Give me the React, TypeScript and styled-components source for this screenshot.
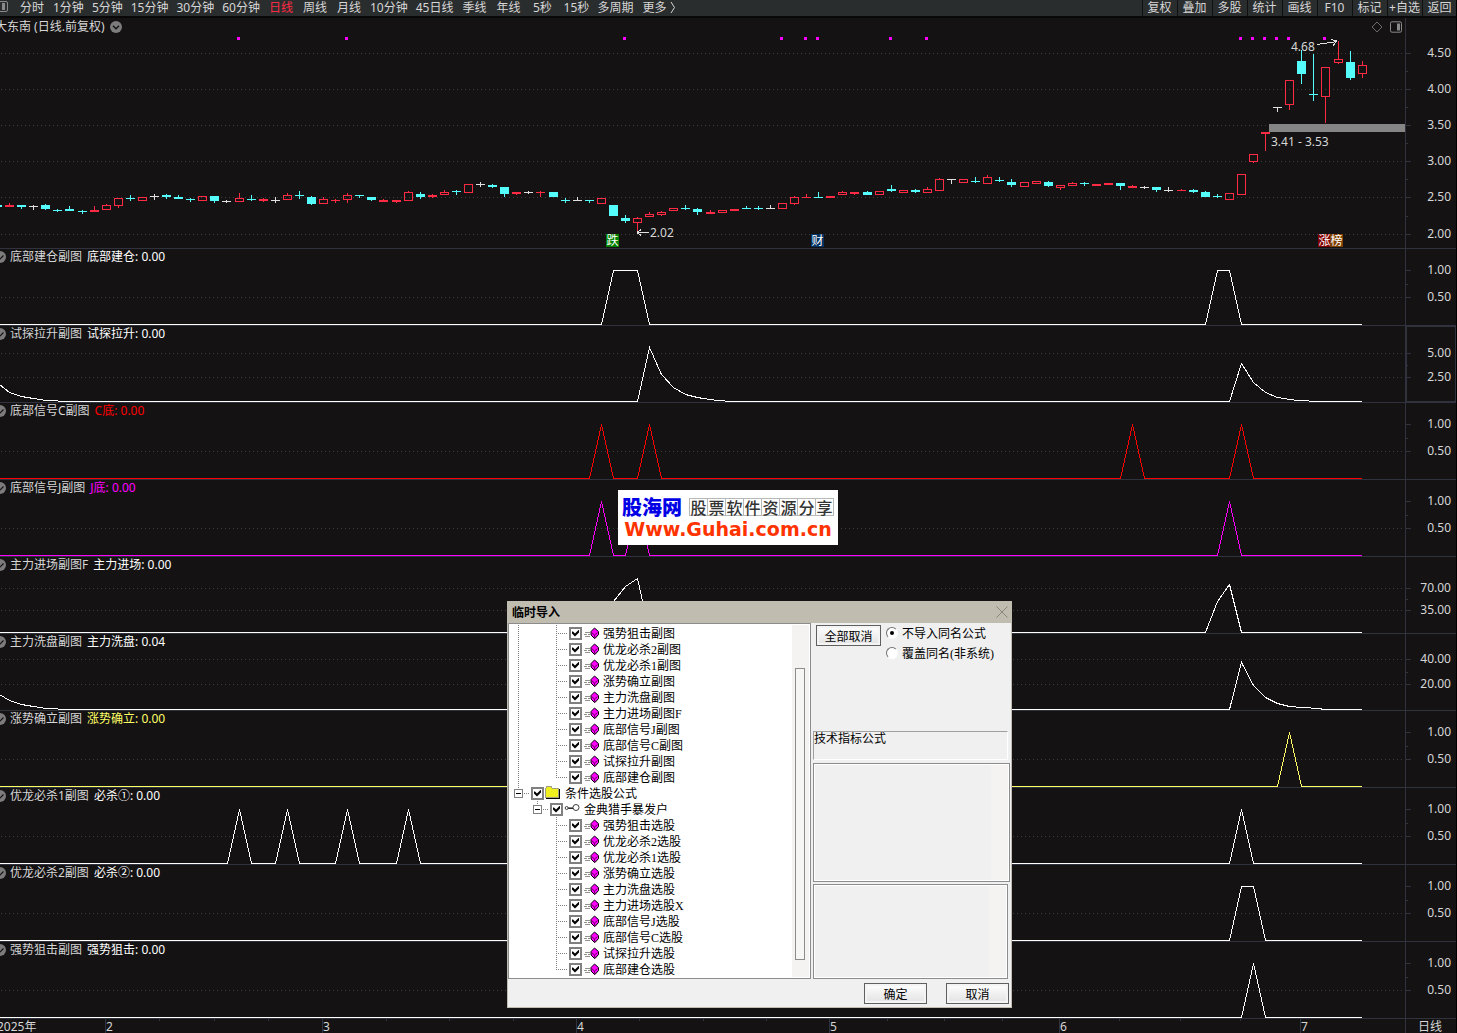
import React from "react";
import styled, { createGlobalStyle, css } from "styled-components";

const uiFont = `"Noto Sans", "Noto Sans CJK SC", sans-serif`;
const dialogFont = `"Liberation Serif", "Noto Sans CJK SC", sans-serif`;

const GlobalStyle = createGlobalStyle`
  *, *::before, *::after { box-sizing: border-box; }
  body { margin: 0; background: #141213; overflow-x: hidden; }
  button, input { font: inherit; color: inherit; margin: 0; padding: 0; }
`;

const color = {
  bg: "#141213",
  line: "#30333d",
  dot: "#3b3d3f",
  text: "#d6d6d6",
  up: "#ff2a44",
  down: "#54fcfc",
  flat: "#e0e0e0",
  magenta: "#ff00ff",
};

/* ---------- page shell ---------- */

const Page = styled.div`
  position: relative;
  overflow: hidden;
  background: ${color.bg};
  color: ${color.text};
  border-right: 1px solid #000;
  font-family: ${uiFont};
  font-size: 12px;
  line-height: 16px;
`;

const Toolbar = styled.header`
  display: flex;
  justify-content: space-between;
  height: 18px;
  background: #2a2d2e;
  border-bottom: 2px solid #080808;
  margin-right: -1px;
`;

const Periods = styled.nav`
  display: flex;
  gap: 8px;
`;

const LayoutButton = styled.button`
  display: flex;
  width: 11px;
  border: 0;
  background: none;
`;

const PeriodButton = styled.button<{ $active?: boolean }>`
  min-width: 26px;
  height: 16px;
  line-height: 16px;
  border: 0;
  background: none;
  white-space: nowrap;
  color: ${(p) => (p.$active ? color.up : color.text)};
`;

const MoreArrow = styled.svg`
  margin-left: -5px;
`;

const Actions = styled.div`
  display: flex;
`;

const ActionButton = styled.button`
  display: flex;
  justify-content: center;
  width: 35px;
  height: 16px;
  padding-right: 1px;
  line-height: 16px;
  border: 0;
  border-left: 1px solid #101010;
  background: none;
  white-space: nowrap;
`;

/* ---------- chart panels ---------- */

const Panel = styled.section`
  display: flex;
  border-bottom: 1px solid ${color.line};
`;

const Plot = styled.div`
  position: relative;
  display: grid;
  flex: 1;
  min-width: 0;
  overflow: hidden;
  > * { grid-area: 1 / 1; }
`;

const Canvas = styled.svg<{ $height: number }>`
  display: block;
  width: 100%;
  height: ${(p) => p.$height}px;
  shape-rendering: crispEdges;
`;

const AxisCanvas = styled.svg`
  display: block;
  flex: none;
  shape-rendering: crispEdges;
  font-family: ${uiFont};
  font-size: 12px;
  fill: ${color.text};
`;

const PanelHead = styled.div`
  display: flex;
  align-items: center;
  align-self: start;
  height: 16px;
  margin-left: -6px;
  white-space: nowrap;
  z-index: 1;
`;

const IndicatorName = styled.span`
  margin: 0 5px 0 4px;
`;

const IndicatorValue = styled.span<{ $color: string }>`
  color: ${(p) => p.$color};
`;

const MainHead = styled(PanelHead)`
  height: 18px;
  margin-left: -5px;
  padding-right: 2px;
  gap: 5px;
`;

const HeadTools = styled.div`
  display: flex;
  gap: 6px;
  margin-left: auto;
`;

const Annotation = styled.span`
  position: absolute;
  line-height: 16px;
  white-space: nowrap;
`;

const Badge = styled.span<{ $bg: string }>`
  position: absolute;
  width: 13px;
  height: 13px;
  line-height: 13px;
  text-align: center;
  color: #fff;
  background: ${(p) => p.$bg};
`;

const TimeRow = styled.footer`
  display: flex;
  height: 14px;
`;

const TimePlot = styled.div`
  position: relative;
  flex: 1;
`;

const Month = styled.span`
  position: absolute;
  top: 0;
  height: 14px;
  line-height: 16px;
  border-left: 1px solid ${color.line};
`;

const MinorTick = styled.i`
  position: absolute;
  top: 0;
  width: 1px;
  height: 2px;
  background: ${color.line};
`;

const TimeUnit = styled.span`
  width: 51px;
  padding-left: 12px;
  line-height: 16px;
  border-left: 1px solid ${color.line};
`;

/* ---------- data ---------- */

const WIDTH = 1405;
const pct = (x: number) => `${(x / WIDTH) * 100}%`;
const barX = (i: number) => 9 + 12 * i + Math.floor((i + 7) / 13);

// kind, high, body top, body bottom, low; rows are measured from BASE_ROW
type Candle = [string, number, number, number, number];
const BASE_ROW = 152;
const candles: Candle[] = [
  ["r", 33, 35, 37, 37], ["c", 35, 35, 37, 39], ["w", 35, 36, 37, 40], ["c", 34, 35, 39, 40],
  ["c", 39, 40, 41, 42], ["c", 36, 39, 41, 41], ["c", 40, 41, 42, 44], ["r", 36, 40, 42, 42],
  ["r", 34, 35, 40, 40], ["r", 28, 28, 36, 38], ["c", 25, 28, 29, 31], ["r", 27, 27, 31, 31],
  ["w", 24, 26, 27, 30], ["c", 24, 25, 27, 29], ["c", 25, 27, 29, 29], ["c", 28, 29, 30, 32],
  ["r", 26, 26, 31, 31], ["c", 26, 26, 31, 33], ["w", 30, 31, 32, 33], ["r", 23, 28, 32, 32],
  ["c", 25, 29, 30, 31], ["r", 28, 29, 31, 32], ["w", 27, 30, 31, 33], ["r", 23, 25, 30, 30],
  ["c", 21, 25, 26, 29], ["c", 26, 27, 34, 35], ["r", 27, 29, 34, 34], ["r", 29, 30, 31, 33],
  ["r", 23, 25, 30, 33], ["c", 25, 25, 26, 28], ["c", 27, 27, 30, 31], ["r", 29, 30, 32, 32],
  ["r", 30, 30, 32, 33], ["r", 21, 22, 31, 31], ["c", 22, 24, 27, 29], ["r", 24, 25, 27, 28],
  ["r", 20, 22, 25, 25], ["c", 20, 21, 22, 25], ["r", 14, 14, 23, 23], ["w", 12, 14, 15, 17],
  ["c", 14, 15, 17, 18], ["c", 17, 17, 24, 27], ["r", 22, 22, 24, 25], ["w", 21, 22, 23, 24],
  ["r", 21, 22, 23, 27], ["c", 22, 22, 27, 27], ["c", 28, 30, 31, 33], ["w", 27, 30, 31, 31],
  ["c", 30, 30, 31, 33], ["r", 28, 28, 34, 34], ["c", 35, 35, 46, 46], ["c", 45, 48, 51, 53],
  ["r", 47, 48, 53, 62], ["r", 42, 44, 47, 47], ["r", 41, 42, 45, 46], ["r", 38, 38, 41, 41],
  ["c", 35, 38, 39, 40], ["c", 38, 39, 42, 45], ["r", 40, 42, 44, 44], ["r", 40, 40, 43, 43],
  ["r", 39, 39, 41, 41], ["c", 36, 38, 39, 39], ["c", 36, 38, 39, 40], ["w", 35, 38, 39, 39],
  ["r", 33, 33, 39, 39], ["r", 26, 27, 34, 35], ["r", 24, 27, 28, 28], ["c", 22, 27, 28, 28],
  ["r", 26, 26, 28, 28], ["r", 21, 22, 25, 25], ["r", 22, 22, 24, 25], ["c", 21, 22, 25, 25],
  ["r", 21, 21, 25, 25], ["c", 15, 19, 21, 22], ["r", 20, 20, 23, 23], ["c", 19, 20, 22, 23],
  ["r", 17, 19, 23, 23], ["r", 8, 9, 21, 21], ["w", 9, 9, 10, 14], ["r", 9, 9, 13, 13],
  ["c", 7, 11, 12, 13], ["r", 5, 7, 14, 14], ["c", 7, 10, 11, 12], ["c", 9, 12, 15, 17],
  ["r", 12, 12, 17, 17], ["r", 11, 11, 14, 14], ["c", 11, 12, 16, 17], ["r", 15, 15, 18, 20],
  ["r", 12, 13, 16, 16], ["c", 12, 13, 14, 16], ["r", 14, 14, 16, 16], ["r", 13, 13, 15, 15],
  ["c", 13, 13, 16, 20], ["r", 15, 16, 18, 18], ["w", 16, 17, 18, 19], ["c", 17, 17, 20, 22],
  ["w", 17, 20, 21, 22], ["r", 19, 20, 21, 21], ["c", 19, 20, 22, 23], ["c", 21, 22, 27, 27],
  ["c", 24, 26, 27, 28], ["r", 23, 23, 30, 30], ["r", 4, 4, 25, 25], ["r", -16, -16, -8, -7],
  ["r", -38, -38, -36, -19], ["w", -63, -63, -62, -58], ["r", -90, -90, -65, -60],
  ["c", -120, -109, -96, -86], ["c", -116, -76, -75, -69], ["r", -103, -103, -73, -47],
  ["r", -129, -111, -107, -106], ["c", -119, -108, -92, -90], ["r", -109, -105, -96, -92],
];
const signals = [19, 28, 51, 64, 66, 67, 73, 76, 102, 103, 104, 105, 106, 109];

type Tick = [number, string];
interface Indicator {
  name: string;
  label: string;
  value: string;
  stroke: string;
  points: string;
  grid: number[];
  ticks: Tick[];
  selected?: boolean;
}

const BASE = 75;
const TOP = 21;
const END = 1361;
const peaks = (...xs: number[]) =>
  [`-1,${BASE}`, ...xs.map((x) => `${x - 12},${BASE} ${x},${TOP} ${x + 12},${BASE}`), `${END},${BASE}`].join(" ");

const unit = { grid: [48], ticks: [[21, "1.00"], [48, "0.50"]] as Tick[] };

const indicators: Indicator[] = [
  { name: "底部建仓副图", label: "底部建仓", value: "0.00", stroke: "#ffffff", ...unit,
    points: "-1,75 601,75 613,21 637,21 649,75 1205,75 1217,21 1229,21 1241,75 1361,75" },
  { name: "试探拉升副图", label: "试探拉升", value: "0.00", stroke: "#ffffff", selected: true,
    grid: [27, 51], ticks: [[27, "5.00"], [51, "2.50"]],
    points: "-1,58 9,66 21,70 33,72 45,74 70,75 637,75 649,21 661,48 673,61 685,68 697,71 709,73 718,74 730,75 1229,75 1241,37 1253,56 1265,66 1277,71 1289,73 1297,74 1320,75 1361,75" },
  { name: "底部信号C副图", label: "C底", value: "0.00", stroke: "#ff0000", ...unit, points: peaks(601, 649, 1132, 1241) },
  { name: "底部信号J副图", label: "J底", value: "0.00", stroke: "#ff00ff", ...unit, points: peaks(601, 637, 1229) },
  { name: "主力进场副图F", label: "主力进场", value: "0.00", stroke: "#ffffff",
    grid: [31, 53], ticks: [[31, "70.00"], [53, "35.00"]],
    points: "-1,75 601,75 613,44 625,29 637,21 649,75 1205,75 1217,44 1229,27 1241,75 1361,75" },
  { name: "主力洗盘副图", label: "主力洗盘", value: "0.04", stroke: "#ffffff",
    grid: [25, 50], ticks: [[25, "40.00"], [50, "20.00"]],
    points: "-1,60 9,66 21,70 33,72 45,74 70,75 1229,75 1241,28 1253,51 1265,63 1277,69 1289,72 1301,73 1320,74 1322,75 1361,75" },
  { name: "涨势确立副图", label: "涨势确立", value: "0.00", stroke: "#ffff66", ...unit, points: peaks(1289) },
  { name: "优龙必杀1副图", label: "必杀①", value: "0.00", stroke: "#ffffff", ...unit, points: peaks(239, 287, 347, 408, 1241) },
  { name: "优龙必杀2副图", label: "必杀②", value: "0.00", stroke: "#ffffff", ...unit,
    points: "-1,75 1229,75 1241,21 1253,21 1265,75 1361,75" },
  { name: "强势狙击副图", label: "强势狙击", value: "0.00", stroke: "#ffffff", ...unit, points: peaks(1253) },
];

const periods = ["分时", "1分钟", "5分钟", "15分钟", "30分钟", "60分钟", "日线", "周线", "月线", "10分钟", "45日线", "季线", "年线", "5秒", "15秒", "多周期", "更多"];
const actions = ["复权", "叠加", "多股", "统计", "画线", "F10", "标记", "+自选", "返回"];
const months: [number, string][] = [[105, "2"], [322, "3"], [576, "4"], [829, "5"], [1059, "6"], [1300, "7"]];

/* ---------- chart pieces ---------- */

const GridRow = ({ y }: { y: number }) => (
  <line x1={1} x2={WIDTH} y1={y + 0.5} y2={y + 0.5} stroke={color.dot} strokeDasharray="1 3" />
);

const CandleShape = ({ data, index }: { data: Candle; index: number }) => {
  const [kind, high, top, bottom, low] = data;
  const x = barX(index);
  const fill = kind === "r" ? color.up : kind === "c" ? color.down : color.flat;
  const hollow = kind === "r" && bottom - top > 2;
  const y = (v: number) => v + BASE_ROW;
  return (
    <g fill={fill}>
      {high < top && <rect x={x} y={y(high)} width={1} height={top - high} />}
      {low > bottom && <rect x={x} y={y(bottom)} width={1} height={low - bottom} />}
      {hollow ? (
        <rect x={x - 3.5} y={y(top) + 0.5} width={8} height={bottom - top - 1} fill="none" stroke={fill} />
      ) : (
        <rect x={x - 4} y={y(top)} width={9} height={bottom - top} />
      )}
    </g>
  );
};

const Axis = ({ height, ticks, selected }: { height: number; ticks: Tick[]; selected?: boolean }) => (
  <AxisCanvas width={51} height={height}>
    <path d={`M.5 0V${height}`} stroke={color.line} />
    {selected && <rect x={1.5} y={0.5} width={49} height={height - 1} fill="none" stroke={color.line} />}
    {ticks.map(([y, label], i) => (
      <g key={label}>
        <rect x={1} y={y} width={5} height={1} fill={color.line} />
        {i > 0 && <rect x={1} y={Math.round((y + ticks[i - 1][0]) / 2)} width={2} height={1} fill={color.line} />}
        <text x={46} y={y + 4} textAnchor="end">{label}</text>
      </g>
    ))}
  </AxisCanvas>
);

const ChevronDisc = () => (
  <svg width="12" height="12" viewBox="0 0 12 12" aria-hidden="true">
    <circle cx="6" cy="6" r="6" fill="#7c7c7c" />
    <path d="M3 4.8 6 7.8 9 4.8" fill="none" stroke="#141213" strokeWidth="1.4" />
  </svg>
);

const CheckDisc = () => (
  <svg width="12" height="12" viewBox="0 0 12 12" aria-hidden="true">
    <circle cx="6" cy="6" r="6" fill="#7c7c7c" />
    <path d="M3.5 5.5 6 8 9.5 4.5" fill="none" stroke="#141213" strokeWidth="1.2" />
  </svg>
);

const MainPanel = () => (
  <Panel>
    <Plot>
      <Canvas $height={230} viewBox={`0 0 ${WIDTH} 230`} preserveAspectRatio="none">
        {[35, 71, 107, 143, 179, 216].map((y) => <GridRow key={y} y={y} />)}
        <rect x={0} y={187} width={2} height={2} fill={color.down} />
        <rect x={1269} y={106} width={136} height={8} fill="#858585" />
        {candles.map((c, i) => <CandleShape key={i} data={c} index={i} />)}
        {signals.map((i) => <rect key={i} x={barX(i) - 2} y={19} width={3} height={3} fill={color.magenta} />)}
        <g fill="none" stroke={color.flat}>
          <path d="M1317 26.5 1337 23.5M1331 21.5 1337 23 1333 27.5" />
          <path d="M637 214.5H649M641 211.5 637.5 214.5 641 217.5" />
          <rect x={637} y={213} width={2} height={3} fill={color.flat} stroke="none" />
        </g>
      </Canvas>
      <MainHead>
        <span>大东南 (日线.前复权)</span>
        <ChevronDisc />
        <HeadTools>
          <svg width="12" height="12" viewBox="0 0 12 12" aria-hidden="true">
            <path d="M6 1 11 6 6 11 1 6Z" fill="none" stroke="#6a6a6a" />
          </svg>
          <svg width="14" height="12" viewBox="0 0 14 12" aria-hidden="true">
            <rect x="1.5" y=".8" width="11" height="10.4" rx="1.5" fill="none" stroke="#8a8a8a" />
            <rect x="8" y="2.5" width="3" height="7" fill="#8a8a8a" />
          </svg>
        </HeadTools>
      </MainHead>
      <Annotation style={{ left: pct(1291), top: 21 }}>4.68</Annotation>
      <Annotation style={{ left: pct(1271), top: 116 }}>3.41 - 3.53</Annotation>
      <Annotation style={{ left: pct(650), top: 207 }}>2.02</Annotation>
      <Badge $bg="#008000" style={{ left: pct(606), top: 216 }}>跌</Badge>
      <Badge $bg="#003264" style={{ left: pct(811), top: 216 }}>财</Badge>
      <Badge $bg="#800000" style={{ left: pct(1318), top: 216 }}>涨</Badge>
      <Badge $bg="#804000" style={{ left: pct(1330), top: 216 }}>榜</Badge>
    </Plot>
    <Axis height={230} ticks={[[35, "4.50"], [71, "4.00"], [107, "3.50"], [143, "3.00"], [179, "2.50"], [216, "2.00"]]} />
  </Panel>
);

const IndicatorPanel = ({ data }: { data: Indicator }) => (
  <Panel>
    <Plot>
      <Canvas $height={76} viewBox={`0 0 ${WIDTH} 76`} preserveAspectRatio="none">
        {data.grid.map((y) => <GridRow key={y} y={y} />)}
        <g transform="translate(.5 .5)">
          <polyline points={data.points} fill="none" stroke={data.stroke} />
        </g>
      </Canvas>
      <PanelHead>
        <CheckDisc />
        <IndicatorName>{data.name}</IndicatorName>
        <IndicatorValue $color={data.stroke}>{data.label}: {data.value}</IndicatorValue>
      </PanelHead>
    </Plot>
    <Axis height={76} ticks={data.ticks} selected={data.selected} />
  </Panel>
);

/* ---------- site banner ---------- */

const Banner = styled.div`
  position: absolute;
  left: 50%;
  top: 490px;
  width: 220px;
  height: 55px;
  margin-left: -110px;
  padding: 6px 4px;
  background: #fff;
`;

const BannerTop = styled.div`
  display: flex;
  align-items: center;
  gap: 7px;
  height: 22px;
`;

const BannerName = styled.strong`
  font: 900 20px/22px "Noto Sans CJK SC", sans-serif;
  color: #0000e6;
`;

const BannerCells = styled.span`
  display: flex;
  border-left: 1px solid #b8b8b8;
`;

const BannerCell = styled.span`
  width: 18px;
  height: 18px;
  border: 1px solid #b8b8b8;
  border-left: 0;
  font: 500 16px/16px "Noto Sans CJK SC", sans-serif;
  text-align: center;
  color: #333;
`;

const BannerUrl = styled.div`
  font: bold 19px/22px "DejaVu Sans", sans-serif;
  color: #ff3300;
  white-space: nowrap;
  text-align: center;
`;

/* ---------- import dialog ---------- */

const Dialog = styled.div`
  position: absolute;
  left: 507px;
  top: 601px;
  width: 505px;
  background: #f0f0f0;
  border: 1px solid #c1bcb0;
  border-top: 0;
  color: #000;
  font-family: ${dialogFont};
  font-size: 12px;
  line-height: 16px;
`;

const TitleBar = styled.div`
  display: flex;
  align-items: center;
  justify-content: space-between;
  height: 22px;
  padding: 0 3px 0 4px;
  background: #c1bcb0;
`;

const DialogTitle = styled.h2`
  margin: 0;
  padding-top: 2px;
  font-size: 12px;
  line-height: 16px;
  font-weight: 600;
`;

const CloseButton = styled.button`
  display: flex;
  border: 0;
  background: none;
`;

const DialogBody = styled.div`
  display: flex;
  gap: 2px;
`;

const TreeBox = styled.div`
  display: flex;
  width: 303px;
  padding: 1px;
  border: 1px solid #8c8c8c;
  background: #fff;
`;

const Tree = styled.ul`
  flex: 1;
  margin: 0;
  padding: 0 0 0 4px;
  list-style: none;
`;

const TreeRow = styled.li`
  display: flex;
  height: 16px;
`;

const vDots = "repeating-linear-gradient(to bottom, #808080 0 1px, transparent 1px 2px)";
const hDots = "repeating-linear-gradient(to right, #808080 0 1px, transparent 1px 2px)";

const Indent = styled.span<{ $line?: boolean }>`
  width: 19px;
  background: ${(p) => (p.$line ? vDots : "none")} 4px 0 / 1px 100% no-repeat;
`;

const Branch = styled.span<{ $last?: boolean }>`
  width: 17px;
  background:
    ${vDots} 4px 0 / 1px ${(p) => (p.$last ? "9px" : "100%")} no-repeat,
    ${hDots} 6px 8px / 10px 1px no-repeat;
`;

const ToggleSlot = styled.span`
  display: flex;
  align-items: center;
  width: 17px;
  background:
    ${vDots} 4px 0 / 1px 4px no-repeat,
    ${hDots} 10px 8px / 5px 1px no-repeat;
`;

const Toggle = styled.button`
  display: grid;
  place-items: center;
  width: 9px;
  height: 9px;
  border: 1px solid #808080;
  background: #fff;
  &::before {
    content: "";
    width: 5px;
    height: 1px;
    background: #000;
  }
`;

const ItemLabel = styled.label`
  display: flex;
  align-items: center;
  height: 16px;
  white-space: nowrap;
`;

const ItemText = styled.span`
  margin-left: 4px;
  padding-top: 2px;
`;

const CheckBox = styled.input.attrs({ type: "checkbox" })`
  appearance: none;
  display: grid;
  place-items: center;
  width: 13px;
  height: 13px;
  margin-right: 1px;
  border: 2px solid #808080;
  background: #fff;
  &:checked::before {
    content: "";
    width: 7px;
    height: 7px;
    background: #000;
    clip-path: polygon(0 2px, 1px 2px, 3px 4px, 7px 0, 7px 3px, 3px 7px, 0 4px);
  }
`;

const ScrollTrack = styled.div`
  width: 17px;
  padding: 43px 4px 17px 3px;
  background: #f4f3f2;
`;

const ScrollThumb = styled.div`
  height: 100%;
  border: 1px solid #8c8c8c;
  background: #f6f6f5;
`;

const SidePane = styled.div`
  display: flex;
  flex: 1;
  flex-direction: column;
`;

const Controls = styled.div`
  display: flex;
  flex: 1;
  align-items: flex-start;
  gap: 5px;
  padding: 2px 0 0 3px;
`;

const PushButton = styled.button<{ $width: number }>`
  width: ${(p) => p.$width}px;
  height: 21px;
  padding-top: 2px;
  line-height: 16px;
  border: 1px solid #606060;
  background: linear-gradient(#fff, #e2e2e2);
  box-shadow: inset 0 0 0 2px #f4f4f4;
`;

const RadioGroup = styled.fieldset`
  display: grid;
  gap: 4px;
  margin: 0;
  padding: 0;
  border: 0;
`;

const Radio = styled.input.attrs({ type: "radio" })`
  appearance: none;
  display: grid;
  place-items: center;
  width: 12px;
  height: 12px;
  border: 1px solid;
  border-color: #707070 #fff #fff #707070;
  border-radius: 50%;
  background: #fff;
  &:checked::before {
    content: "";
    width: 4px;
    height: 4px;
    border-radius: 50%;
    background: #000;
  }
`;

const TypeField = styled.div`
  height: 29px;
  margin: 0 3px 3px 0;
  line-height: 14px;
  border: 1px solid;
  border-color: #a0a0a0 #fff #fff #a0a0a0;
`;

const listFrame = css`
  border: 1px solid #8c8c8c;
  box-shadow: inset 0 0 0 1px #fff;
  background: linear-gradient(#f4f3f2, #f4f3f2) right 1px top 0 / 17px 100% no-repeat #f0f0f0;
`;

const DetailList = styled.div`
  height: 119px;
  margin: 0 1px 2px 0;
  ${listFrame}
`;

const NoteList = styled.div`
  height: 95px;
  margin-right: 3px;
  ${listFrame}
`;

const DialogFooter = styled.div`
  display: flex;
  justify-content: flex-end;
  gap: 19px;
  padding: 4px 2px 3px;
`;

const FormulaIcon = () => (
  <svg width="16" height="14" viewBox="0 0 16 14" aria-hidden="true">
    <path d="M2 6.5h5M1 8.5h3M5 8.5h2M2 10.5h5" stroke="#909090" shapeRendering="crispEdges" />
    <path d="M11.5 2 15.5 5.5V8.5L12 12.5H11.5L8 9V5.5Z" fill="#ff00ff" stroke="#000" />
    <path d="M8.5 6.5 11.5 9 14.5 6.5M11.7 9V12" fill="none" stroke="#400040" strokeWidth=".8" />
  </svg>
);

const FolderIcon = () => (
  <svg width="16" height="14" viewBox="0 0 16 14" aria-hidden="true" shapeRendering="crispEdges">
    <path d="M.5 11.5V2.5L2 .5H6L7.5 2.5H13.5V11.5Z" fill="#f0f020" stroke="#a0a080" />
    <path d="M1 12.5H14.5V3" fill="none" stroke="#000" />
  </svg>
);

const KeyIcon = () => (
  <svg width="16" height="14" viewBox="0 0 16 14" aria-hidden="true">
    <circle cx="12" cy="5.5" r="3" fill="#fff" stroke="#404040" />
    <path d="M3 6.2H9" stroke="#202020" strokeWidth="1.5" />
    <circle cx="2.7" cy="6" r="1.5" fill="#fff" stroke="#404040" />
  </svg>
);

const chartFormulas = ["强势狙击副图", "优龙必杀2副图", "优龙必杀1副图", "涨势确立副图", "主力洗盘副图", "主力进场副图F", "底部信号J副图", "底部信号C副图", "试探拉升副图", "底部建仓副图"];
const pickFormulas = ["强势狙击选股", "优龙必杀2选股", "优龙必杀1选股", "涨势确立选股", "主力洗盘选股", "主力进场选股X", "底部信号J选股", "底部信号C选股", "试探拉升选股", "底部建仓选股"];

const Item = ({ icon, text }: { icon: React.ReactNode; text: string }) => (
  <ItemLabel>
    <CheckBox defaultChecked />
    {icon}
    <ItemText>{text}</ItemText>
  </ItemLabel>
);

const Leaves = ({ items, line }: { items: string[]; line?: boolean }) => (
  <>
    {items.map((text, i) => (
      <TreeRow key={text}>
        <Indent $line={line} />
        <Indent />
        <Branch $last={i === items.length - 1} />
        <Item icon={<FormulaIcon />} text={text} />
      </TreeRow>
    ))}
  </>
);

const ImportDialog = () => (
  <Dialog role="dialog" aria-labelledby="import-title">
    <TitleBar>
      <DialogTitle id="import-title">临时导入</DialogTitle>
      <CloseButton aria-label="关闭">
        <svg width="12" height="12" viewBox="0 0 12 12" aria-hidden="true">
          <path d="M.5.5 11.5 11.5M11.5.5.5 11.5" stroke="#8a867c" />
        </svg>
      </CloseButton>
    </TitleBar>
    <DialogBody>
      <TreeBox>
        <Tree>
          <Leaves items={chartFormulas} line />
          <TreeRow>
            <ToggleSlot><Toggle aria-label="折叠" /></ToggleSlot>
            <Item icon={<FolderIcon />} text="条件选股公式" />
          </TreeRow>
          <TreeRow>
            <Indent />
            <ToggleSlot><Toggle aria-label="折叠" /></ToggleSlot>
            <Item icon={<KeyIcon />} text="金典猎手暴发户" />
          </TreeRow>
          <Leaves items={pickFormulas} />
        </Tree>
        <ScrollTrack><ScrollThumb /></ScrollTrack>
      </TreeBox>
      <SidePane>
        <Controls>
          <PushButton $width={65}>全部取消</PushButton>
          <RadioGroup>
            <ItemLabel><Radio name="mode" defaultChecked /><ItemText>不导入同名公式</ItemText></ItemLabel>
            <ItemLabel><Radio name="mode" /><ItemText>覆盖同名(非系统)</ItemText></ItemLabel>
          </RadioGroup>
        </Controls>
        <TypeField>技术指标公式</TypeField>
        <DetailList />
        <NoteList />
      </SidePane>
    </DialogBody>
    <DialogFooter>
      <PushButton $width={63}>确定</PushButton>
      <PushButton $width={63}>取消</PushButton>
    </DialogFooter>
  </Dialog>
);

export default function App() {
  return (
    <Page>
      <GlobalStyle />
      <Toolbar>
        <Periods>
          <LayoutButton aria-label="布局">
            <svg width="9" height="14" viewBox="0 0 9 14" aria-hidden="true">
              <path d="M0 1.5H6Q7.5 1.5 7.5 3V10Q7.5 11.5 6 11.5H0" fill="none" stroke="#8a8a8a" />
              <rect x="2" y="3" width="3" height="7" fill="#8a8a8a" />
            </svg>
          </LayoutButton>
          {periods.map((p) => <PeriodButton key={p} $active={p === "日线"}>{p}</PeriodButton>)}
          <MoreArrow width="6" height="14" viewBox="0 0 6 14" aria-hidden="true">
            <path d="M1 2 4.5 7.5 1 13" fill="none" stroke={color.text} />
          </MoreArrow>
        </Periods>
        <Actions>
          {actions.map((a) => <ActionButton key={a}>{a}</ActionButton>)}
        </Actions>
      </Toolbar>
      <main>
        <MainPanel />
        {indicators.map((d) => <IndicatorPanel key={d.name} data={d} />)}
      </main>
      <TimeRow>
        <TimePlot>
          <Month style={{ left: pct(-4) }}>2025年</Month>
          {months.map(([x, label]) => <Month key={label} style={{ left: pct(x) }}>{label}</Month>)}
          {months.slice(1).flatMap(([x], i) =>
            [1, 2, 3].map((q) => {
              const from = months[i][0];
              return <MinorTick key={`${x}-${q}`} style={{ left: pct(Math.round(from + ((x - from) * q) / 4)) }} />;
            })
          )}
        </TimePlot>
        <TimeUnit>日线</TimeUnit>
      </TimeRow>
      <Banner>
        <BannerTop>
          <BannerName>股海网</BannerName>
          <BannerCells>
            {[..."股票软件资源分享"].map((c, i) => <BannerCell key={i}>{c}</BannerCell>)}
          </BannerCells>
        </BannerTop>
        <BannerUrl>Www.Guhai.com.cn</BannerUrl>
      </Banner>
      <ImportDialog />
    </Page>
  );
}
